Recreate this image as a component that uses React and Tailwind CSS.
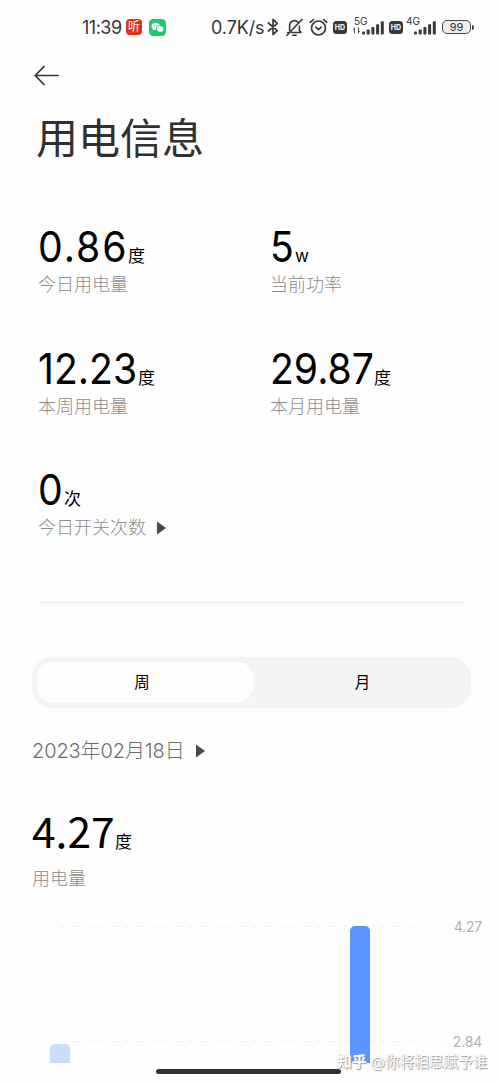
import React from 'react'

const SANS = "font-['Inter','Noto_Sans_CJK_SC',sans-serif]"

const SignalBars = ({ className }) => (
  <svg className={className} width="22" height="14" viewBox="0 0 22 14" fill="#38383a">
    <rect x="0" y="10.5" width="3" height="3" rx="0.8" />
    <rect x="4.7" y="8.5" width="3" height="5" rx="0.8" />
    <rect x="9.4" y="6" width="3" height="7.5" rx="0.8" />
    <rect x="14.1" y="3.2" width="3" height="10.3" rx="0.8" />
    <rect x="18.8" y="0.2" width="3" height="13.3" rx="0.8" />
  </svg>
)

const HdBadge = ({ className }) => (
  <div className={`flex h-[13px] w-[14px] shrink-0 items-center justify-center rounded-[3.5px] bg-[#38383a] text-[7px] font-bold leading-none text-white ${className}`}>
    HD
  </div>
)

const StatusBar = () => (
  <div className="flex h-[54px] shrink-0 items-center pl-[82px] text-[#333336]">
    <span className="w-[44px] whitespace-nowrap text-[18px] tracking-[-0.5px]">11:39</span>
    <div className="flex h-4 w-4 items-center justify-center rounded-[4px] bg-[#e0301e] text-[12px] leading-none text-white">听</div>
    <svg className="ml-[7px]" width="17" height="17" viewBox="0 0 17 17">
      <rect width="17" height="17" rx="4.2" fill="#16cc6b" />
      <path d="M6.7 3.7c-2.5 0-4.3 1.6-4.3 3.6 0 1.2.6 2.1 1.6 2.8l-.4 1.4 1.7-.8c.5.1 1 .2 1.6.2-.5-2.7 1.6-4.3 4.1-4.3-.4-1.7-2.2-2.9-4.3-2.9z" fill="#fff" />
      <path d="M14.6 9.8c0-1.7-1.6-2.9-3.5-2.9s-3.5 1.2-3.5 2.9 1.6 2.9 3.5 2.9c.4 0 .8-.1 1.2-.2l1.3.7-.3-1.2c.8-.5 1.3-1.3 1.3-2.2z" fill="#fff" />
      <g fill="#16cc6b">
        <circle cx="5.3" cy="6.3" r=".6" />
        <circle cx="8.2" cy="6.3" r=".6" />
        <circle cx="10" cy="9" r=".5" />
        <circle cx="12.3" cy="9" r=".5" />
      </g>
    </svg>
    <span className="ml-[45px] w-[56px] whitespace-nowrap text-[18px] tracking-[-0.1px]">0.7K/s</span>
    <svg width="12" height="18" viewBox="0 0 12 18" fill="none" stroke="#38383a" strokeWidth="1.7" strokeLinejoin="round" strokeLinecap="round">
      <path d="M1.3 5 10.3 12.7 6 16.5V1.5l4.3 3.8L1.3 13" />
    </svg>
    <svg className="ml-[6px]" width="19" height="19" viewBox="0 0 19 19" fill="none" stroke="#38383a" strokeWidth="1.6" strokeLinecap="round" strokeLinejoin="round">
      <path d="M4.6 12.5V7.5a4.9 4.9 0 0 1 8.4-3.3M14.4 8v4.5l1.6 2H6.5M2.6 14.5h.8M7.8 17.3h3.4M17 1.5 2 17.3" />
    </svg>
    <svg className="ml-[5px]" width="19" height="19" viewBox="0 0 19 19" fill="none" stroke="#38383a" strokeWidth="1.7" strokeLinecap="round" strokeLinejoin="round">
      <circle cx="9.5" cy="10" r="7" />
      <path d="m6.7 9.2 2.8 2.4 2.8-2.4M1.2 4.3 4.4 1.6M17.8 4.3l-3.2-2.7" />
    </svg>
    <HdBadge className="ml-[5px]" />
    <div className="relative ml-[6px] h-[18px] w-[32px] shrink-0">
      <span className="absolute -top-[2px] left-[1px] text-[10px] leading-[10px]">5G</span>
      <svg className="absolute bottom-[2px] left-0" width="7" height="7" viewBox="0 0 6 6" fill="#38383a">
        <path d="M0 2.5 1.6 0v5.5h-.8V2.5zM6 3.5 4.3 6V.5h.8v3z" />
      </svg>
      <SignalBars className="absolute bottom-[1px] left-[9px]" />
    </div>
    <HdBadge className="ml-[4px]" />
    <div className="relative ml-[3px] h-[18px] w-[31px] shrink-0">
      <span className="absolute -top-[2px] left-0 text-[10px] leading-[10px]">4G</span>
      <SignalBars className="absolute bottom-[1px] left-[8px]" />
    </div>
    <div className="ml-[5px] flex h-[14px] w-[29px] shrink-0 items-center justify-center rounded-[5px] border-[1.5px] border-[#48484a] bg-[#eeeeee] text-[11px] leading-none">99</div>
    <div className="ml-[1px] h-[5px] w-[2px] rounded-r bg-[#48484a]" />
  </div>
)

const Triangle = ({ className }) => (
  <svg className={className} width="9" height="14" viewBox="0 0 9 14">
    <path d="M0 .5v13L9 7z" fill="#484848" />
  </svg>
)

const Stat = ({ value, unit, label, width, arrow }) => (
  <div className="h-[121.5px]">
    <div className="flex h-[46px] items-baseline leading-[46px] text-black">
      <span className={`origin-left scale-x-[0.91] whitespace-nowrap text-[43px] ${width}`}>{value}</span>
      <span className="text-[17px]">{unit}</span>
    </div>
    <div className="mt-[3px] flex h-[26px] items-center text-[18px] font-light leading-[26px] text-[#8c8c8c]">
      {label}
      {arrow && <Triangle className="ml-[11px]" />}
    </div>
  </div>
)

const stats = [
  { value: '0.86', unit: '度', label: '今日用电量', width: 'w-[90px] tracking-[2.2px]' },
  { value: '5', unit: 'w', label: '当前功率', width: 'w-[25px]' },
  { value: '12.23', unit: '度', label: '本周用电量', width: 'w-[100px]' },
  { value: '29.87', unit: '度', label: '本月用电量', width: 'w-[104px]' },
  { value: '0', unit: '次', label: '今日开关次数', width: 'w-[26px]', arrow: true },
]

const Chart = () => (
  <div className="relative h-[163px] shrink-0">
    <svg className="block" width="500" height="163" viewBox="0 0 500 163">
      <path d="M60 26.5H422M60 141.5H422" stroke="#f0f0f0" strokeWidth="1" strokeDasharray="7.5 5.3" />
      <path d="M50 163v-14a5 5 0 0 1 5-5h10a5 5 0 0 1 5 5v14z" fill="#cbddfd" />
      <path d="M350 163V31a5 5 0 0 1 5-5h10a5 5 0 0 1 5 5v132z" fill="#5a94fc" />
    </svg>
    <span className="absolute right-[18px] top-[17px] text-[14px] leading-[20px] tracking-[-0.2px] text-[#b0b0b0]">4.27</span>
    <span className="absolute right-[18px] top-[132px] text-[14px] leading-[20px] tracking-[-0.2px] text-[#b0b0b0]">2.84</span>
  </div>
)

const App = () => {
  return (
    <div className={`relative flex h-[1083px] w-[500px] flex-col overflow-hidden bg-[#fefefe] ${SANS}`}>
      <StatusBar />
      <svg className="ml-[34px] mt-[11px] shrink-0" width="26" height="21" viewBox="0 0 26 21" fill="none" stroke="#333333" strokeWidth="1.7">
        <path d="M24.8 10.5H1.5M10.5 1 1.3 10.5l9.2 9.5" />
      </svg>
      <h1 className="ml-[36px] mt-[23px] h-[60px] shrink-0 text-[42px] leading-[60px] text-[#303030]">用电信息</h1>

      <div className="ml-[38px] mt-[54px] grid shrink-0 grid-cols-[232px_1fr]">
        {stats.map((s) => (
          <Stat key={s.label} {...s} />
        ))}
      </div>

      <div className="ml-[40px] mt-[14px] h-px w-[426px] shrink-0 bg-[#ebebeb]" />

      <div className="ml-[32px] mt-[54px] flex h-[51px] w-[439px] shrink-0 rounded-[20px] bg-[#f4f4f4] p-[5px] text-[15.5px] text-black">
        <div className="flex w-[216px] items-center justify-center rounded-[16px] bg-[#fefefe] pr-[6px] pt-[2px]">周</div>
        <div className="flex flex-1 items-center justify-center pl-[6px] pt-[2px]">月</div>
      </div>

      <div className="ml-[32px] mt-[29px] flex h-[28px] shrink-0 items-center text-[20px] font-light leading-[28px] text-[#6c6c6c]">
        <span className="w-[152px] whitespace-nowrap tracking-[-0.1px]">2023年02月18日</span>
        <Triangle className="ml-[12px]" />
      </div>

      <div className="ml-[32px] mt-[42px] flex h-[46px] shrink-0 items-baseline font-['Noto_Sans_CJK_SC',sans-serif] leading-[46px] text-black">
        <span className="w-[83px] text-[42.5px]">4.27</span>
        <span className="text-[17px]">度</span>
      </div>
      <div className="ml-[32px] mt-[13px] h-[26px] shrink-0 text-[18px] font-light leading-[26px] text-[#8c8c8c]">用电量</div>

      <div className="mt-[8px] shrink-0">
        <Chart />
      </div>

      <div className="absolute left-[156px] top-[1069px] h-[5px] w-[185px] rounded-full bg-[#303030]" />
      <div className="absolute left-[337px] top-[1052px] whitespace-nowrap text-[14.7px] leading-[20px] text-white [text-shadow:1px_1px_1px_#999,0_0_1px_#bbb]">
        <span className="font-bold">知乎</span> @你将相思赋予谁
      </div>
    </div>
  )
}

export default App
